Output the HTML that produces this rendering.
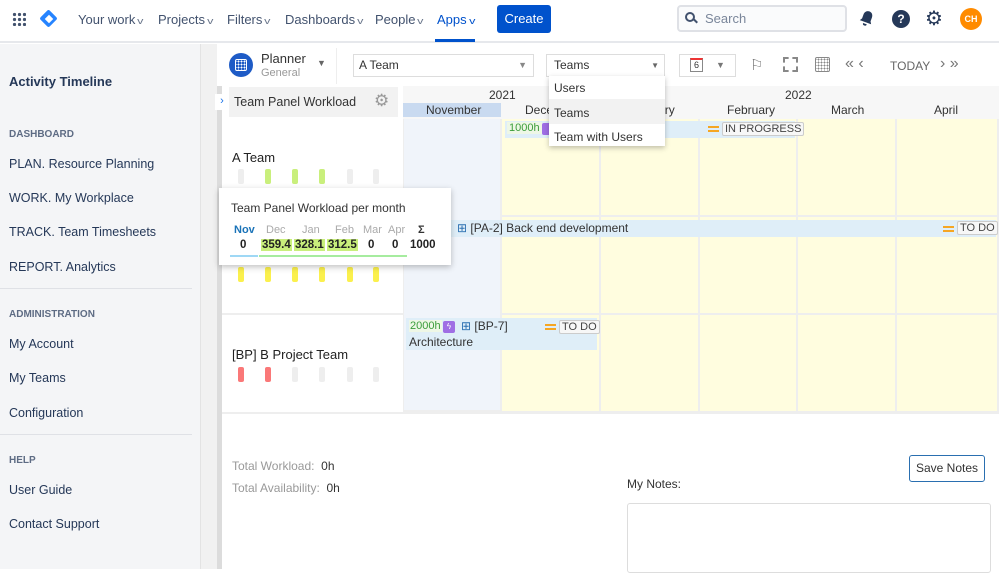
<!DOCTYPE html><html><head><style>
*{box-sizing:border-box;margin:0;padding:0}
body{width:999px;height:569px;overflow:hidden;font-family:"Liberation Sans",sans-serif;background:#fff;position:relative;color:#253858}
.a{position:absolute;white-space:nowrap}
.nav{font-size:13px;color:#42526e;top:12px}
.nav i{font-style:normal;font-size:9px;color:#6b778c;margin-left:3px;display:inline-block;transform:scaleX(1.4)}
.side{font-size:12.5px;color:#253858}
.sh{font-size:10px;font-weight:bold;color:#5e6c84}
.cell{position:absolute;border-right:2px solid #eee;border-bottom:2px solid #eee}
.y{background:#fffddf}.b{background:#f0f4fa}
.bar{position:absolute;width:6px;height:15px;border-radius:2px}
</style></head><body>
<div class="a" style="left:0;top:0;width:999px;height:43px;border-bottom:2px solid #e6e8ec"></div>
<div class="a" style="left:12px;top:12px;width:14px;height:14px;background:radial-gradient(circle,#42526e 1.6px,transparent 1.8px) 0 0/5px 5px"></div>
<div class="a" style="left:42px;top:12px;width:13px;height:13px;background:#2684ff;transform:rotate(45deg);border-radius:2px"></div>
<div class="a" style="left:45.5px;top:15.5px;width:6px;height:6px;background:#fff;transform:rotate(45deg)"></div>
<div class="a nav" style="left:78px">Your work<i>v</i></div>
<div class="a nav" style="left:158px">Projects<i>v</i></div>
<div class="a nav" style="left:227px">Filters<i>v</i></div>
<div class="a nav" style="left:285px">Dashboards<i>v</i></div>
<div class="a nav" style="left:375px">People<i>v</i></div>
<div class="a nav" style="left:437px;color:#0052cc">Apps<i style="color:#0052cc">v</i></div>
<div class="a" style="left:435px;top:39px;width:40px;height:3px;background:#0052cc"></div>
<div class="a" style="left:497px;top:5px;width:54px;height:28px;background:#0052cc;border-radius:3px;color:#fff;font-size:13px;text-align:center;line-height:28px">Create</div>
<div class="a" style="left:677px;top:5px;width:170px;height:27px;border:2px solid #dfe1e6;border-radius:4px;background:#fafbfc;color:#7a869a;font-size:13px;line-height:23px;padding-left:26px">Search</div>
<div class="a" style="left:685px;top:12px;width:10px;height:10px;border:2px solid #42526e;border-radius:50%"></div>
<div class="a" style="left:693px;top:20px;width:5px;height:2px;background:#42526e;transform:rotate(45deg)"></div>
<svg class="a" style="left:859px;top:10px" width="16" height="17" viewBox="0 0 16 17"><path d="M8 1C5 1 3.5 3.5 3.5 6v4L2 12.5h12L12.5 10V6C12.5 3.5 11 1 8 1z M6 14a2 2 0 0 0 4 0z" fill="#253858" transform="rotate(20 8 8)"/></svg>
<div class="a" style="left:892px;top:10px;width:18px;height:18px;border-radius:50%;background:#253858;color:#fff;font-size:12px;font-weight:bold;text-align:center;line-height:18px">?</div>
<div class="a" style="left:925px;top:6px;font-size:20px;color:#253858">⚙</div>
<div class="a" style="left:960px;top:8px;width:22px;height:22px;border-radius:50%;background:#ff8b00;color:#fff;font-size:9px;font-weight:bold;text-align:center;line-height:22px">CH</div>
<div class="a" style="left:0;top:44px;width:200px;height:525px;background:#f4f5f7"></div>
<div class="a" style="left:200px;top:44px;width:17px;height:525px;background:#f1f1f1;border-left:1px solid #e3e3e3"></div>
<div class="a" style="left:217px;top:86px;width:5px;height:483px;background:#dcdcdc"></div>
<div class="a side" style="left:9px;top:74px;font-weight:bold;font-size:13px">Activity Timeline</div>
<div class="a sh" style="left:9px;top:129px">DASHBOARD</div>
<div class="a side" style="left:9px;top:157px">PLAN. Resource Planning</div>
<div class="a side" style="left:9px;top:191px">WORK. My Workplace</div>
<div class="a side" style="left:9px;top:225px">TRACK. Team Timesheets</div>
<div class="a side" style="left:9px;top:260px">REPORT. Analytics</div>
<div class="a" style="left:0;top:288px;width:192px;height:1px;background:#dfe1e6"></div>
<div class="a sh" style="left:9px;top:309px">ADMINISTRATION</div>
<div class="a side" style="left:9px;top:337px">My Account</div>
<div class="a side" style="left:9px;top:371px">My Teams</div>
<div class="a side" style="left:9px;top:406px">Configuration</div>
<div class="a" style="left:0;top:434px;width:192px;height:1px;background:#dfe1e6"></div>
<div class="a sh" style="left:9px;top:455px">HELP</div>
<div class="a side" style="left:9px;top:483px">User Guide</div>
<div class="a side" style="left:9px;top:517px">Contact Support</div>
<div class="a" style="left:229px;top:53px;width:24px;height:24px;border-radius:50%;background:#1e5bc6"></div>
<div class="a" style="left:235px;top:59px;width:12px;height:12px;border:1.5px solid #fff;border-radius:2px;background:radial-gradient(circle,#fff 0.8px,transparent 1px) 1px 3px/3px 3px"></div>
<div class="a" style="left:261px;top:51px;font-size:13px;color:#333">Planner</div>
<div class="a" style="left:261px;top:67px;font-size:11px;color:#999">General</div>
<div class="a" style="left:317px;top:58px;font-size:9px;color:#666">▼</div>
<div class="a" style="left:336px;top:48px;width:1px;height:36px;background:#eee"></div>
<div class="a" style="left:353px;top:54px;width:181px;height:23px;border:1px solid #ddd;font-size:12px;color:#333;line-height:21px;padding-left:5px">A Team<span style="position:absolute;right:6px;color:#888;font-size:9px">▼</span></div>
<div class="a" style="left:546px;top:54px;width:119px;height:23px;border:1px solid #ddd;font-size:12px;color:#333;line-height:21px;padding-left:7px">Teams<span style="position:absolute;right:5px;color:#666;font-size:8px">▼</span></div>
<div class="a" style="left:679px;top:54px;width:57px;height:23px;border:1px solid #ddd"></div>
<div class="a" style="left:690px;top:58px;width:13px;height:14px;border:1px solid #888;border-top:2px solid #e33;font-size:9px;text-align:center;line-height:11px;color:#333">6</div>
<div class="a" style="left:716px;top:60px;font-size:9px;color:#777">▼</div>
<div class="a" style="left:750px;top:56px;font-size:15px;color:#777">⚐</div>
<div class="a" style="left:783px;top:57px;width:15px;height:15px;border:2px dashed #888"></div>
<div class="a" style="left:815px;top:57px;width:15px;height:15px;border:1.5px solid #888;border-radius:2px;background:radial-gradient(circle,#888 0.8px,transparent 1px) 1px 3px/3px 3px"></div>
<div class="a" style="left:845px;top:55px;font-size:16px;color:#777">« ‹</div>
<div class="a" style="left:890px;top:59px;font-size:12px;color:#666">TODAY</div>
<div class="a" style="left:940px;top:55px;font-size:16px;color:#777">› »</div>
<div class="a" style="left:229px;top:87px;width:169px;height:30px;background:#f2f2f2"></div>
<div class="a" style="left:215px;top:94px;width:14px;height:16px;background:#fff;border-radius:0 8px 8px 0;color:#1a73e8;font-size:11px;line-height:15px;text-align:center">›</div>
<div class="a" style="left:234px;top:95px;font-size:12.5px;color:#333">Team Panel Workload</div>
<div class="a" style="left:374px;top:91px;font-size:17px;color:#999">⚙</div>
<div class="a" style="left:222px;top:215px;width:181px;height:2px;background:#eee"></div>
<div class="a" style="left:222px;top:313px;width:181px;height:2px;background:#eee"></div>
<div class="a" style="left:222px;top:412px;width:777px;height:2px;background:#eee"></div>
<div class="a" style="left:232px;top:150px;font-size:13px;color:#222">A Team</div>
<div class="bar" style="left:238px;top:169px;background:#eee"></div>
<div class="bar" style="left:265px;top:169px;background:#c9ef7c"></div>
<div class="bar" style="left:292px;top:169px;background:#c9ef7c"></div>
<div class="bar" style="left:319px;top:169px;background:#c9ef7c"></div>
<div class="bar" style="left:347px;top:169px;background:#eee"></div>
<div class="bar" style="left:373px;top:169px;background:#eee"></div>
<div class="bar" style="left:238px;top:267px;background:#fbf04d"></div>
<div class="bar" style="left:265px;top:267px;background:#fbf04d"></div>
<div class="bar" style="left:292px;top:267px;background:#fbf04d"></div>
<div class="bar" style="left:319px;top:267px;background:#fbf04d"></div>
<div class="bar" style="left:347px;top:267px;background:#fbf04d"></div>
<div class="bar" style="left:373px;top:267px;background:#fbf04d"></div>
<div class="a" style="left:232px;top:347px;font-size:13px;color:#222">[BP] B Project Team</div>
<div class="bar" style="left:238px;top:367px;background:#fa7878"></div>
<div class="bar" style="left:265px;top:367px;background:#fa7878"></div>
<div class="bar" style="left:292px;top:367px;background:#eee"></div>
<div class="bar" style="left:319px;top:367px;background:#eee"></div>
<div class="bar" style="left:347px;top:367px;background:#eee"></div>
<div class="bar" style="left:373px;top:367px;background:#eee"></div>
<div class="a" style="left:403px;top:86px;width:596px;height:33px;background:#f7f7f7"></div>
<div class="a" style="left:489px;top:88px;font-size:12px;color:#333">2021</div>
<div class="a" style="left:785px;top:88px;font-size:12px;color:#333">2022</div>
<div class="a" style="left:403px;top:103px;width:98px;height:14px;background:#c9daf0"></div>
<div class="a" style="left:426px;top:103px;font-size:12px;color:#333">November</div>
<div class="a" style="left:525px;top:103px;font-size:12px;color:#333">December</div>
<div class="a" style="left:632px;top:103px;font-size:12px;color:#333">January</div>
<div class="a" style="left:727px;top:103px;font-size:12px;color:#333">February</div>
<div class="a" style="left:831px;top:103px;font-size:12px;color:#333">March</div>
<div class="a" style="left:934px;top:103px;font-size:12px;color:#333">April</div>
<div class="cell b" style="left:403px;top:119px;width:99px;height:293px;border-left:1px solid #eee"></div>
<div class="cell y" style="left:502px;top:119px;width:99px;height:98px"></div>
<div class="cell y" style="left:601px;top:119px;width:99px;height:98px"></div>
<div class="cell y" style="left:700px;top:119px;width:98px;height:98px"></div>
<div class="cell y" style="left:798px;top:119px;width:99px;height:98px"></div>
<div class="cell y" style="left:897px;top:119px;width:102px;height:98px"></div>
<div class="cell y" style="left:502px;top:217px;width:99px;height:98px"></div>
<div class="cell y" style="left:601px;top:217px;width:99px;height:98px"></div>
<div class="cell y" style="left:700px;top:217px;width:98px;height:98px"></div>
<div class="cell y" style="left:798px;top:217px;width:99px;height:98px"></div>
<div class="cell y" style="left:897px;top:217px;width:102px;height:98px"></div>
<div class="cell y" style="left:502px;top:315px;width:99px;height:98px"></div>
<div class="cell y" style="left:601px;top:315px;width:99px;height:98px"></div>
<div class="cell y" style="left:700px;top:315px;width:98px;height:98px"></div>
<div class="cell y" style="left:798px;top:315px;width:99px;height:98px"></div>
<div class="cell y" style="left:897px;top:315px;width:102px;height:98px"></div>
<div class="a" style="left:505px;top:121px;width:290px;height:17px;background:#dfeef8"></div>
<div class="a" style="left:507px;top:122px;font-size:11px;color:#3a9d3a;background:#eef7e6;padding:0 2px">1000h</div>
<div class="a" style="left:542px;top:123px;width:12px;height:12px;background:#9f6ee4;border-radius:2px"></div>
<div class="a" style="left:708px;top:126px;width:11px;height:2px;background:#f5a623;box-shadow:0 4px 0 #f5a623"></div>
<div class="a" style="left:722px;top:122px;font-size:11px;color:#444;border:1px solid #ccc;background:#f7f7f7;padding:0 2px;border-radius:2px">IN PROGRESS</div>
<div class="a" style="left:451px;top:220px;width:545px;height:17px;background:#dfeef8"></div>
<div class="a" style="left:457px;top:221px;font-size:12px;color:#333"><span style="color:#2a6fb0">⊞</span> [PA-2] Back end development</div>
<div class="a" style="left:943px;top:226px;width:11px;height:2px;background:#f5a623;box-shadow:0 4px 0 #f5a623"></div>
<div class="a" style="left:957px;top:221px;font-size:11px;color:#444;border:1px solid #ccc;background:#f7f7f7;padding:0 2px;border-radius:2px">TO DO</div>
<div class="a" style="left:406px;top:318px;width:191px;height:32px;background:#dfeef8"></div>
<div class="a" style="left:409px;top:320px;font-size:11px;color:#3a9d3a;background:#eef7e6;padding:0 1px">2000h</div>
<div class="a" style="left:443px;top:321px;width:12px;height:12px;background:#9f6ee4;border-radius:2px;color:#fff;font-size:8px;text-align:center;line-height:12px">ϟ</div>
<div class="a" style="left:461px;top:319px;font-size:12px;color:#333"><span style="color:#2a6fb0">⊞</span> [BP-7]</div>
<div class="a" style="left:545px;top:324px;width:11px;height:2px;background:#f5a623;box-shadow:0 4px 0 #f5a623"></div>
<div class="a" style="left:559px;top:320px;font-size:11px;color:#444;border:1px solid #ccc;background:#f7f7f7;padding:0 2px;border-radius:2px">TO DO</div>
<div class="a" style="left:409px;top:335px;font-size:12px;color:#333">Architecture</div>
<div class="a" style="left:549px;top:76px;width:116px;height:70px;background:#fff;box-shadow:0 2px 5px rgba(0,0,0,.25)"></div>
<div class="a" style="left:549px;top:99px;width:116px;height:25px;background:#f2f2f2"></div>
<div class="a" style="left:554px;top:81px;font-size:12px;color:#333">Users</div>
<div class="a" style="left:554px;top:106px;font-size:12px;color:#333">Teams</div>
<div class="a" style="left:554px;top:130px;font-size:12px;color:#333">Team with Users</div>
<div class="a" style="left:219px;top:188px;width:232px;height:77px;background:#fff;box-shadow:0 2px 6px rgba(0,0,0,.25)"></div>
<div class="a" style="left:231px;top:201px;font-size:12px;color:#333">Team Panel Workload per month</div>
<div class="a" style="left:234px;top:224px;font-size:11px;color:#aaa;width:200px">
<span class="a" style="left:0;color:#1a73b8;font-weight:bold">Nov</span><span class="a" style="left:32px">Dec</span><span class="a" style="left:68px">Jan</span><span class="a" style="left:101px">Feb</span><span class="a" style="left:129px">Mar</span><span class="a" style="left:154px">Apr</span><span class="a" style="left:184px;color:#333;font-weight:bold">Σ</span></div>
<div class="a" style="left:230px;top:239px;font-size:11.5px;font-weight:bold;color:#222">
<span class="a" style="left:10px">0</span><span class="a" style="left:31px;background:#c9ef7c;padding:0 1px">359.4</span><span class="a" style="left:64px;background:#c9ef7c;padding:0 1px">328.1</span><span class="a" style="left:97px;background:#c9ef7c;padding:0 1px">312.5</span><span class="a" style="left:138px">0</span><span class="a" style="left:162px">0</span><span class="a" style="left:180px">1000</span></div>
<div class="a" style="left:230px;top:255px;width:28px;height:2px;background:#9fd8f5"></div>
<div class="a" style="left:259px;top:255px;width:148px;height:2px;background:#a6ec9f"></div>
<div class="a" style="left:232px;top:459px;font-size:12px;color:#999">Total Workload:&nbsp; <span style="color:#333">0h</span></div>
<div class="a" style="left:232px;top:481px;font-size:12px;color:#999">Total Availability:&nbsp; <span style="color:#333">0h</span></div>
<div class="a" style="left:627px;top:477px;font-size:12px;color:#333">My Notes:</div>
<div class="a" style="left:909px;top:455px;width:76px;height:27px;border:1px solid #2a6fb0;border-radius:3px;font-size:12px;color:#333;text-align:center;line-height:25px">Save Notes</div>
<div class="a" style="left:627px;top:503px;width:364px;height:70px;border:1px solid #ddd;border-radius:3px"></div>
</body></html>
